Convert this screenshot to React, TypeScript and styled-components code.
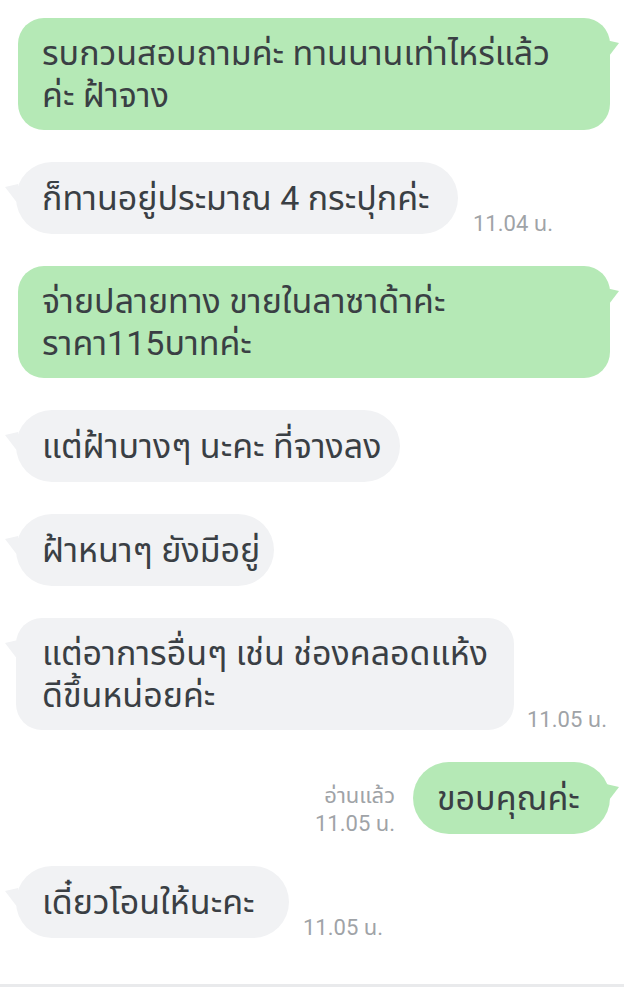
import { FC, ReactNode } from 'react';
import styled, { createGlobalStyle, css } from 'styled-components';

type Side = 'left' | 'right';

type Message = {
  side: Side;
  lines: string[];
  width: number;
  time?: string;
  read?: boolean;
  timeGap?: number;
};

const messages: Message[] = [
  { side: 'right', lines: ['รบกวนสอบถามค่ะ ทานนานเท่าไหร่แล้ว', 'ค่ะ ฝ้าจาง'], width: 592 },
  { side: 'left', lines: ['ก็ทานอยู่ประมาณ 4 กระปุกค่ะ'], width: 442, time: '11.04 น.', timeGap: 15 },
  { side: 'right', lines: ['จ่ายปลายทาง ขายในลาซาด้าค่ะ', 'ราคา115บาทค่ะ'], width: 592 },
  { side: 'left', lines: ['แต่ฝ้าบางๆ นะคะ ที่จางลง'], width: 384 },
  { side: 'left', lines: ['ฝ้าหนาๆ ยังมีอยู่'], width: 258 },
  { side: 'left', lines: ['แต่อาการอื่นๆ เช่น ช่องคลอดแห้ง', 'ดีขึ้นหน่อยค่ะ'], width: 498, time: '11.05 น.', timeGap: 13 },
  { side: 'right', lines: ['ขอบคุณค่ะ'], width: 197, time: '11.05 น.', read: true },
  { side: 'left', lines: ['เดี๋ยวโอนให้นะคะ'], width: 273, time: '11.05 น.', timeGap: 14 },
];

const Tail: FC<{ side: Side }> = ({ side }) => (
  <TailIcon $side={side} width="14" height="22" viewBox="0 0 14 22">
    {side === 'right' ? (
      <path d="M0 0 L13 3 L0 20 Z" fill="#b5e9b6" />
    ) : (
      <path d="M14 0 L1 3 L14 20 Z" fill="#f1f2f4" />
    )}
  </TailIcon>
);

const Bubble: FC<{ side: Side; width: number; multi: boolean; children: ReactNode }> = ({
  side,
  width,
  multi,
  children,
}) => (
  <BubbleBox $side={side} $w={width} $multi={multi}>
    <Tail side={side} />
    {children}
  </BubbleBox>
);

const App: FC = () => {
  return (
    <>
      <GlobalStyle />
      <Chat>
        {messages.map((m, i) => (
          <Row key={i} $side={m.side}>
            {m.side === 'right' && m.time && (
              <Meta $side="right">
                {m.read && <span>อ่านแล้ว</span>}
                <span>{m.time}</span>
              </Meta>
            )}
            <Bubble side={m.side} width={m.width} multi={m.lines.length > 1}>
              {m.lines.map((l, j) => (
                <Line key={j}>{l}</Line>
              ))}
            </Bubble>
            {m.side === 'left' && m.time && (
              <Meta $side="left" $gap={m.timeGap}>
                <span>{m.time}</span>
              </Meta>
            )}
          </Row>
        ))}
      </Chat>
      <BottomBar />
    </>
  );
};

export default App;

const GlobalStyle = createGlobalStyle`
  html, body {
    margin: 0;
    padding: 0;
    background: #ffffff;
  }
  body {
    width: 624px;
    height: 987px;
    overflow: hidden;
    font-family: Roboto, "Noto Sans Thai", "Noto Sans", sans-serif;
  }
`;

const Chat = styled.div`
  display: flex;
  flex-direction: column;
  gap: 32px;
  padding: 18px 14px 0 16px;
  height: 967px;
  box-sizing: border-box;
`;

const Row = styled.div<{ $side: Side }>`
  display: flex;
  align-items: flex-end;
  justify-content: ${({ $side }) => ($side === 'right' ? 'flex-end' : 'flex-start')};
  padding-left: ${({ $side }) => ($side === 'right' ? '2px' : '0')};
`;

const BubbleBox = styled.div<{ $side: Side; $w: number; $multi: boolean }>`
  position: relative;
  box-sizing: border-box;
  display: flex;
  flex-direction: column;
  justify-content: center;
  width: ${({ $w }) => $w}px;
  padding: 14px 0 14px 24px;
  min-height: 72px;
  border-radius: ${({ $multi }) => ($multi ? '26px' : '36px')};
  color: #3a3f44;
  font-size: 34px;
  line-height: 42px;
  white-space: nowrap;
  ${({ $side }) =>
    $side === 'right'
      ? css`
          background: #b5e9b6;
        `
      : css`
          background: #f1f2f4;
          padding-left: 26px;
        `}
`;

const TailIcon = styled.svg<{ $side: Side }>`
  position: absolute;
  top: 22px;
  ${({ $side }) => ($side === 'right' ? 'right: -10px;' : 'left: -12px;')}
`;

const Line = styled.div``;

const Meta = styled.div<{ $side: Side; $gap?: number }>`
  display: flex;
  flex-direction: column;
  align-items: ${({ $side }) => ($side === 'right' ? 'flex-end' : 'flex-start')};
  color: #9fa3a7;
  font-size: 22px;
  line-height: 28px;
  margin-bottom: -4px;
  ${({ $side, $gap }) =>
    $side === 'right' ? 'margin-right: 18px;' : `margin-left: ${$gap ?? 14}px;`}
`;

const BottomBar = styled.div`
  height: 3px;
  margin-top: 17px;
  background: #e9eaec;
`;
